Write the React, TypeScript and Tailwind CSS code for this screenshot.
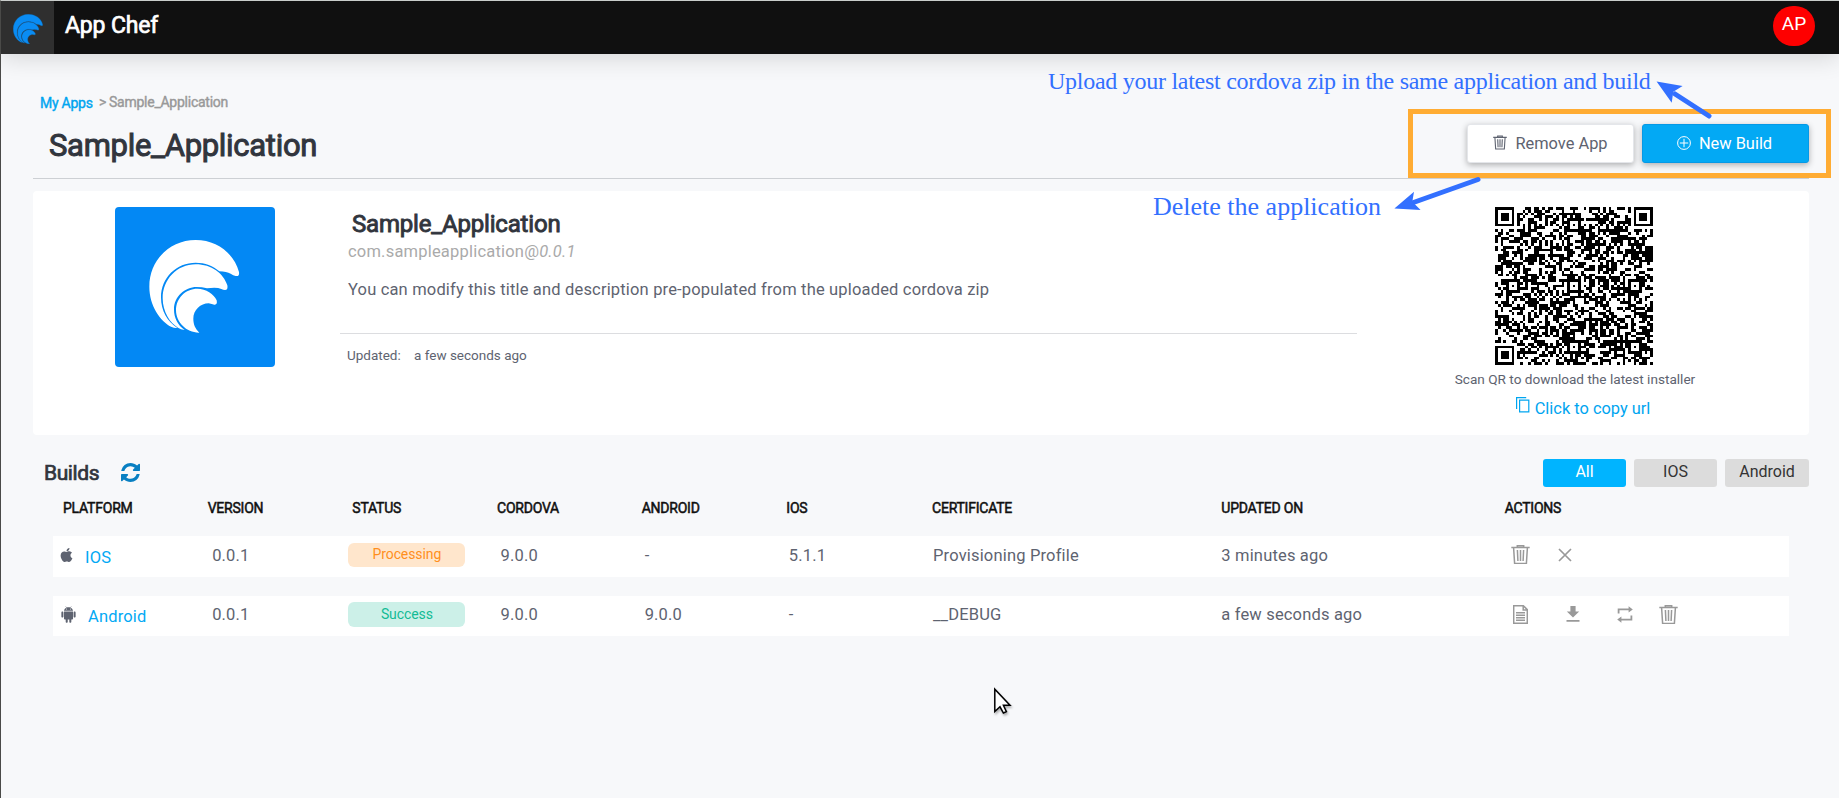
import { FaApple } from "react-icons/fa";
import { AiFillAndroid } from "react-icons/ai";

function LogoShapes() {
  return (
    <>
      <path d="M467 288Q479 290 477 276C462 220 410 180 347 180C270 180 208 240 208 320C208 376 240 424 275 441Q283 445 292 444C262 425 243 392 243 352C243 292 290 248 347 248C375 248 400 258 418 274Q440 275 452 281Q460 286 467 288Z" />
      <path d="M435 330Q445 330 442 316C430 280 395 253 347 253C291 253 248 298 248 355C248 395 270 430 294 443Q302 449 314 450C293 436 282 414 282 388C282 350 314 321 350 321Q366 321 381 325Q410 320 424 327Q430 330 435 330Z" />
      <path d="M403 374Q413 375 410 361C402 342 378 326 352 326C317 326 288 354 288 391C288 427 320 459 358 458C345 445 340 432 340 416C340 390 362 370 386 370Q396 372 403 374Z" />
    </>
  );
}

const N = 57;
function buildQr() {
  let seed = 987123;
  const rnd = () => {
    seed = (seed * 1103515245 + 12345) & 0x7fffffff;
    return ((seed >> 12) & 255) < 138 ? 1 : 0;
  };
  const g: number[][] = [];
  for (let y = 0; y < N; y++) {
    g.push([]);
    for (let x = 0; x < N; x++) g[y].push(rnd());
  }
  for (let i = 0; i < N; i++) {
    g[6][i] = (i + 1) % 2;
    g[i][6] = (i + 1) % 2;
  }
  const ring = (cx: number, cy: number, r: number, dark: (d: number) => boolean) => {
    for (let dy = -r; dy <= r; dy++)
      for (let dx = -r; dx <= r; dx++) {
        const x = cx + dx;
        const y = cy + dy;
        if (x < 0 || y < 0 || x >= N || y >= N) continue;
        g[y][x] = dark(Math.max(Math.abs(dx), Math.abs(dy))) ? 1 : 0;
      }
  };
  for (const [x, y] of [[28, 6], [6, 28], [28, 28], [50, 28], [28, 50], [50, 50]]) ring(x, y, 2, (d) => d !== 1);
  for (const [x, y] of [[3, 3], [N - 4, 3], [3, N - 4]]) ring(x, y, 4, (d) => d < 2 || d === 3);
  let path = "";
  for (let y = 0; y < N; y++)
    for (let x = 0; x < N; x++) {
      if (!g[y][x]) continue;
      let w = 1;
      while (x + w < N && g[y][x + w]) w++;
      path += `M${x} ${y}h${w}v1h-${w}z`;
      x += w - 1;
    }
  return path;
}
const QR_PATH = buildQr();

function Trash({ className }: { className: string }) {
  return (
    <svg viewBox="0 0 19 19" className={className} fill="none" stroke="currentColor" strokeWidth="1.5">
      <path d="M0.3 2.6h18.4M6.3 2.4V0.7h6.4v1.7M2.6 2.8l1 15.6h11.8l1-15.6M6.4 5l.5 11M9.5 5v11M12.6 5l-.5 11" />
    </svg>
  );
}

const headers = ["PLATFORM", "VERSION", "STATUS", "CORDOVA", "ANDROID", "IOS", "CERTIFICATE", "UPDATED ON", "ACTIONS"];
const headerPad = ["pl-2.5", "pl-2.5", "pl-2.5", "pl-2.5", "pl-2.5", "pl-2.5", "col-span-2 pl-[11px]", "col-span-2 pl-[11px]", "col-span-2 pl-[5px]"];

export default function App() {
  return (
    <div className="relative h-[798px] w-[1839px] overflow-hidden border-l border-t border-l-[#4a4a48] border-t-[#c9cdcb] bg-[#f7f8fa] font-['Roboto',sans-serif] text-base text-[#5e6370]">
      <header className="relative flex h-[53px] items-start bg-[#101010] shadow-[0_4px_24px_rgba(0,0,0,0.14)]">
        <div className="flex h-[53px] w-[53px] items-center justify-center bg-[#2f2f2f]">
          <svg viewBox="206 178 274 282" className="mt-0.5 h-[30px] w-[30px]" fill="#0a8cf3" stroke="#0c6fbd" strokeWidth="3" preserveAspectRatio="none">
            <LogoShapes />
          </svg>
        </div>
        <div className="ml-[11px] mt-[11px] text-[23px] leading-7 tracking-[-0.15px] text-white [-webkit-text-stroke:0.7px]">App Chef</div>
        <div className="ml-auto mr-6 mt-[5px] flex h-10 w-[42px] justify-center rounded-full bg-[#fe0000] text-[19px] leading-[36px] text-white">AP</div>
      </header>

      <main className="pl-8 pr-[30px] pt-[38px]">
        <nav className="flex h-5 pl-[7px] text-[14px] leading-5 tracking-[-0.25px] text-[#999] [-webkit-text-stroke:0.4px]">
          <a className="relative top-px w-[59px] text-[#00a5f0]">My Apps</a>
          <span className="w-[10px]">&gt;</span>
          <span>Sample_Application</span>
        </nav>
        <div className="flex h-[67px] items-start border-b border-[#cdd0d4] pt-3">
          <h1 className="ml-4 mt-0.5 text-[31px] leading-[39px] tracking-[-0.3px] text-[#31353d] [-webkit-text-stroke:1px]">Sample_Application</h1>
          <button className="ml-auto flex h-[39px] w-[167px] items-center justify-center gap-2 rounded-[3px] border border-[#e4e6ea] bg-white text-base shadow-[0_2px_6px_rgba(0,0,0,0.3)]">
            <Trash className="mb-0.5 h-[15px] w-3.5" />
            <span className="mt-0.5 text-[16.4px]">Remove App</span>
          </button>
          <button className="ml-2 flex h-[39px] w-[167px] items-center justify-center gap-2 rounded-[3px] border border-[#0599e6] bg-[#03a9f4] text-base text-white shadow-[0_2px_6px_rgba(0,0,0,0.3)]">
            <svg viewBox="0 0 14 14" className="mb-0.5 h-3.5 w-3.5" fill="none" stroke="currentColor">
              <circle cx="7" cy="7" r="6.4" />
              <path d="M7 2.8v8.4M2.8 7h8.4" />
            </svg>
            <span className="mr-0.5 mt-0.5 text-[16.4px]">New Build</span>
          </button>
        </div>

        <section className="mt-3 flex h-[244px] items-start rounded bg-white pt-4">
          <div className="ml-[82px] h-40 w-40 overflow-hidden rounded bg-[#0388f4]">
            <svg viewBox="105 81 480 480" className="h-40 w-40" fill="#fff">
              <LogoShapes />
            </svg>
          </div>
          <div className="ml-[65px] w-[1017px]">
            <h2 className="ml-3 mt-[3px] text-[24px] leading-7 tracking-[-0.18px] text-[#31353d] [-webkit-text-stroke:0.9px]">Sample_Application</h2>
            <p className="ml-2 mt-1 text-[16.5px] leading-5 tracking-[0.2px] text-[#aaa]">com.sampleapplication@<i>0.0.1</i></p>
            <p className="ml-2 mt-[18px] text-[16.5px] leading-5 tracking-[0.17px]">You can modify this title and description pre-populated from the uploaded cordova zip</p>
            <div className="mt-[33px] border-t border-[#dcdde0] pl-[7px] pt-[11px] text-[13.5px] leading-5">
              <span className="inline-block w-[67px]">Updated:</span>
              <span>a few seconds ago</span>
            </div>
          </div>
          <div className="ml-24 flex w-[242px] flex-col items-center whitespace-nowrap">
            <svg viewBox="0 0 57 57" className="h-[158px] w-[158px]" shapeRendering="crispEdges">
              <path d={QR_PATH} fill="#000" />
            </svg>
            <p className="ml-0.5 mt-1 text-[13.6px] leading-5">Scan QR to download the latest installer</p>
            <a className="ml-[18px] mt-2.5 flex h-5 items-start gap-[5px] text-[16.4px] leading-5 text-[#00a5f0]">
              <svg viewBox="0 0 14 16" className="-mt-0.5 h-4 w-3.5" fill="none" stroke="currentColor" strokeWidth="1.2">
                <path d="M0.6 12V0.6h9.6M3.6 3.1h9.2v11.8H3.6z" />
              </svg>
              <span>Click to copy url</span>
            </a>
          </div>
        </section>

        <div className="mt-6 flex h-7 items-start">
          <h3 className="ml-[11px] w-[55px] text-[21px] leading-7 tracking-[-0.4px] text-[#31353d] [-webkit-text-stroke:0.7px]">Builds</h3>
          <svg viewBox="128 128 1536 1536" className="ml-[22px] mt-1 h-[19px] w-[19px]" fill="#087fc2">
            <path d="M1639 1056q0 5-1 7-64 268-268 434.5t-478 166.5q-146 0-282.5-55t-243.5-157l-129 129q-19 19-45 19t-45-19-19-45v-448q0-26 19-45t45-19h448q26 0 45 19t19 45-19 45l-137 137q71 66 161 102t187 36q134 0 250-65t186-179q11-17 53-117 8-23 30-23h192q13 0 22.5 9.5t9.5 22.5zm25-800v448q0 26-19 45t-45 19h-448q-26 0-45-19t-19-45 19-45l138-138q-148-137-349-137-134 0-250 65t-186 179q-11 17-53 117-8 23-30 23h-199q-13 0-22.5-9.5t-9.5-22.5v-7q65-268 270-434.5t480-166.5q146 0 284 55.5t245 156.5l130-129q19-19 45-19t45 19 19 45z" />
          </svg>
          <div className="ml-auto flex gap-2 text-base leading-[25px] text-[#333]">
            <div className="h-7 w-[83px] rounded-[3px] bg-[#00b4ff] text-center text-white">All</div>
            <div className="h-7 w-[83px] rounded-[3px] bg-[#dcdcdc] text-center">IOS</div>
            <div className="h-7 w-[84px] rounded-[3px] bg-[#dcdcdc] text-center">Android</div>
          </div>
        </div>

        <div className="ml-5 mr-5 mt-[11px] grid h-5 grid-cols-12 text-[14px] leading-5 tracking-[-0.22px] text-[#101010] [-webkit-text-stroke:0.5px]">
          {headers.map((h, i) => (
            <div key={h} className={headerPad[i]}>{h}</div>
          ))}
        </div>

        <div className="ml-5 mr-5 mt-[18px] grid h-[41px] grid-cols-12 bg-white pl-[5px] pr-px pt-2.5 text-[16.5px] leading-5 tracking-[0.17px]">
          <div className="flex pl-0.5 text-[#03a9f4]">
            <FaApple className="mt-px h-4 w-[13px] text-[#5e6370]" />
            <span className="ml-3 mt-0.5">IOS</span>
          </div>
          <div className="pl-2.5">0.0.1</div>
          <div className="pl-0.5">
            <div className="-mt-[3px] h-6 w-[117px] rounded-md bg-[#ffe6cc] text-center text-[14px] leading-[23px] tracking-[-0.1px] text-[#ff8f1c]">Processing</div>
          </div>
          <div className="pl-2.5">9.0.0</div>
          <div className="pl-2.5">-</div>
          <div className="pl-2.5">5.1.1</div>
          <div className="col-span-2 pl-2.5">Provisioning Profile</div>
          <div className="col-span-2 pl-2.5">3 minutes ago</div>
          <div className="col-span-2 flex items-start pl-[11px] text-[#999]">
            <Trash className="-mt-px h-[19px] w-[19px]" />
            <svg viewBox="0 0 14 14" className="ml-7 mt-0.5 h-3.5 w-3.5" stroke="currentColor" strokeWidth="1.7">
              <path d="M1 1l12 12M13 1L1 13" />
            </svg>
          </div>
        </div>

        <div className="ml-5 mr-5 mt-[19px] grid h-10 grid-cols-12 bg-white pl-[5px] pr-px pt-[9px] text-[16.5px] leading-5 tracking-[0.17px]">
          <div className="flex pl-px text-[#03a9f4]">
            <AiFillAndroid className="mt-0 h-[19px] w-[19px] text-[#5e6370]" />
            <span className="ml-2.5 mt-0.5">Android</span>
          </div>
          <div className="pl-2.5">0.0.1</div>
          <div className="pl-0.5">
            <div className="-mt-[3px] h-[25px] w-[117px] rounded-md bg-[#ccf0e8] text-center text-[14px] leading-6 tracking-[-0.1px] text-[#12bb95]">Success</div>
          </div>
          <div className="pl-2.5">9.0.0</div>
          <div className="pl-2.5">9.0.0</div>
          <div className="pl-2.5">-</div>
          <div className="col-span-2 pl-2.5">__DEBUG</div>
          <div className="col-span-2 pl-2.5">a few seconds ago</div>
          <div className="col-span-2 flex items-start pl-[13.5px] text-[#999]">
            <svg viewBox="0 0 15 19" className="h-[19px] w-[15px]" fill="none" stroke="currentColor" strokeWidth="1.5">
              <path d="M0.7 0.7h9.6l4 4v13.6H0.7zM10.2 0.7v4.2h4M3 7.8h9M3 10.3h9M3 12.8h9M3 15.3h9" />
            </svg>
            <svg viewBox="0 0 14 16" className="ml-[38px] mt-px h-4 w-3.5" fill="currentColor">
              <path d="M4.4 0h5.2v5.4h3.6L7 11.6 0.8 5.4h3.6zM0.5 14h13v1.8H0.5z" />
            </svg>
            <svg viewBox="0 0 16 17" className="ml-[37px] mt-px h-[17px] w-4" fill="none" stroke="currentColor" strokeWidth="1.8">
              <path d="M1.6 7.4V3.4h11M14.4 9.6v4h-11" />
              <path d="M11.6 0.2l4.2 3.2-4.2 3.2zM4.4 10.4l-4.2 3.2 4.2 3.2z" fill="currentColor" stroke="none" />
            </svg>
            <Trash className="ml-[26px] h-[19px] w-[19px]" />
          </div>
        </div>
      </main>

      <div className="absolute left-[1407px] top-[108px] h-[69px] w-[423px] border-[5px] border-[#ffac33]" />
      <div className="absolute left-[1047px] top-[66px] whitespace-nowrap font-['Liberation_Serif',serif] text-[24px] leading-7 tracking-[-0.27px] text-[#3370ff]">
        Upload your latest cordova zip in the same application and build
      </div>
      <div className="absolute left-[1152px] top-[192px] whitespace-nowrap font-['Liberation_Serif',serif] text-[26px] leading-7 text-[#3370ff]">
        Delete the application
      </div>
      <svg viewBox="1390 70 330 150" className="absolute left-[1389px] top-[69px] h-[150px] w-[330px]" fill="#3370ff">
        <path d="M1675 94L1709 116M1412 203L1478 179.5" stroke="#3370ff" strokeWidth="5" strokeLinecap="round" />
        <path d="M1656.6 81.6L1682.6 86L1673.3 91.7L1671.7 102.7ZM1394.4 208.4L1414 191.8L1412.3 201.7L1420.6 210Z" />
      </svg>
      <svg viewBox="0 0 20 28" className="absolute left-[992px] top-[686px] h-7 w-5 drop-shadow-[1px_2px_1px_rgba(0,0,0,0.3)]">
        <path d="M1.8 2.2V24.6L7 19.8L10.4 26L13.4 24.6L10.4 18.2H17Z" fill="#fff" stroke="#000" strokeWidth="1.5" />
      </svg>
    </div>
  );
}
